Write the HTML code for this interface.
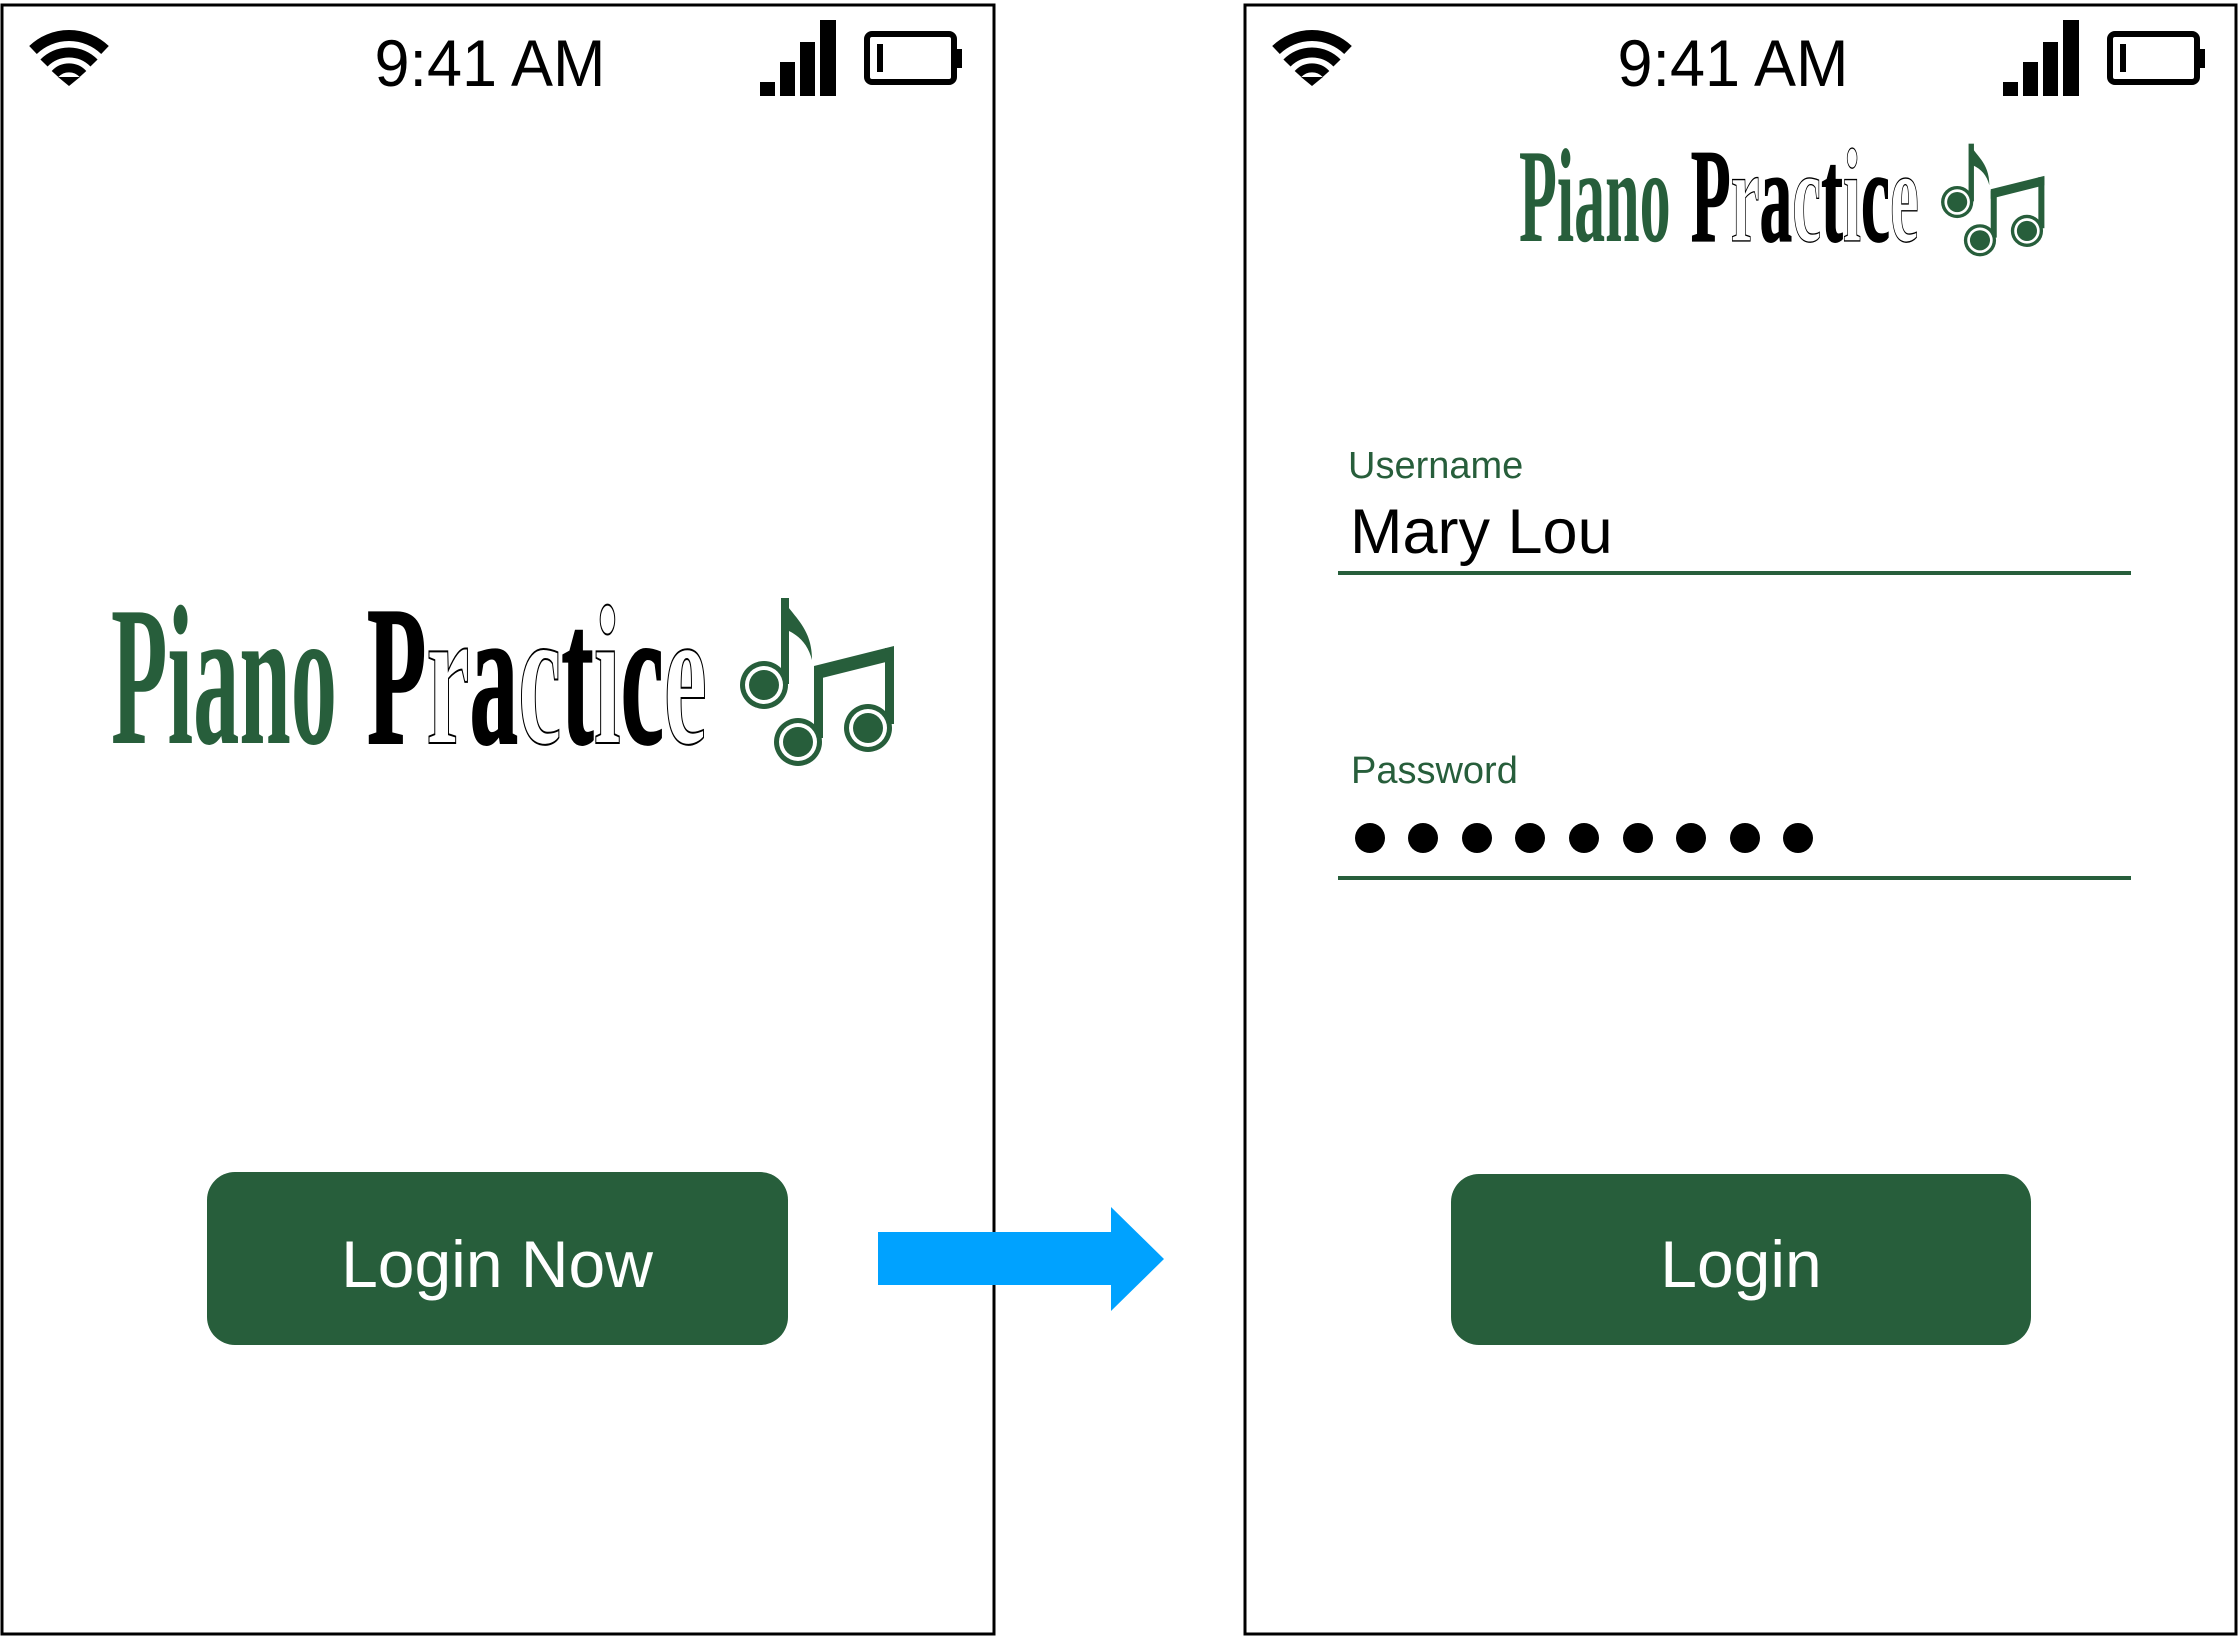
<!DOCTYPE html>
<html><head><meta charset="utf-8"><style>html,body{margin:0;padding:0;background:#fff;width:2239px;height:1637px;overflow:hidden}svg{display:block}</style></head><body>
<svg width="2239" height="1637" viewBox="0 0 2239 1637" xmlns="http://www.w3.org/2000/svg">
<rect x="0" y="0" width="2239" height="1637" fill="#fff"/>
<rect x="2" y="5" width="992" height="1629" fill="none" stroke="#000" stroke-width="3"/>
<rect x="1245" y="5" width="991" height="1629" fill="none" stroke="#000" stroke-width="3"/>

<g>
<path d="M33 50 A52 52 0 0 1 105 50" fill="none" stroke="#000" stroke-width="11"/>
<path d="M44 63 A35 35 0 0 1 94 63" fill="none" stroke="#000" stroke-width="10"/>
<path d="M55 74 A19 19 0 0 1 83 74" fill="none" stroke="#000" stroke-width="9"/>
<path d="M58 77 L69 86 L80 77 Z" fill="#000"/>
<text x="490" y="86" text-anchor="middle" font-family="Liberation Sans, sans-serif" font-size="66" textLength="231" lengthAdjust="spacingAndGlyphs" fill="#000">9:41 AM</text>
<rect x="760" y="82" width="15" height="14" fill="#000"/>
<rect x="780" y="62" width="15" height="34" fill="#000"/>
<rect x="800" y="42" width="15" height="54" fill="#000"/>
<rect x="820" y="20" width="16" height="76" fill="#000"/>
<rect x="867" y="34" width="87" height="48" rx="5" fill="none" stroke="#000" stroke-width="6"/>
<rect x="954" y="49" width="8" height="19" fill="#000"/>
<rect x="877" y="44" width="6" height="28" fill="#000"/>
</g>
<g transform="translate(1243,0)">
<path d="M33 50 A52 52 0 0 1 105 50" fill="none" stroke="#000" stroke-width="11"/>
<path d="M44 63 A35 35 0 0 1 94 63" fill="none" stroke="#000" stroke-width="10"/>
<path d="M55 74 A19 19 0 0 1 83 74" fill="none" stroke="#000" stroke-width="9"/>
<path d="M58 77 L69 86 L80 77 Z" fill="#000"/>
<text x="490" y="86" text-anchor="middle" font-family="Liberation Sans, sans-serif" font-size="66" textLength="231" lengthAdjust="spacingAndGlyphs" fill="#000">9:41 AM</text>
<rect x="760" y="82" width="15" height="14" fill="#000"/>
<rect x="780" y="62" width="15" height="34" fill="#000"/>
<rect x="800" y="42" width="15" height="54" fill="#000"/>
<rect x="820" y="20" width="16" height="76" fill="#000"/>
<rect x="867" y="34" width="87" height="48" rx="5" fill="none" stroke="#000" stroke-width="6"/>
<rect x="954" y="49" width="8" height="19" fill="#000"/>
<rect x="877" y="44" width="6" height="28" fill="#000"/>
</g>

<g>
<g transform="translate(111,743) scale(1,1.33)">
<text x="0" y="0" font-family="Liberation Serif, serif" font-weight="bold" font-size="150" textLength="226" lengthAdjust="spacingAndGlyphs" fill="#275e3b">Piano</text>
<text x="256" y="0" font-family="Liberation Serif, serif" font-weight="bold" font-size="150" textLength="340" lengthAdjust="spacingAndGlyphs" fill="#000" stroke="#000" stroke-width="1.5"><tspan>P</tspan><tspan fill="#fff">r</tspan><tspan>a</tspan><tspan fill="#fff">c</tspan><tspan>t</tspan><tspan fill="#fff">i</tspan><tspan>c</tspan><tspan fill="#fff">e</tspan></text>
</g>
<g fill="#275e3b">
<rect x="781" y="598" width="8" height="86"/>
<path d="M783 598 C790 615 812 625 812 660 C808 645 800 636 787 630 Z"/>
<circle cx="764" cy="685" r="24"/><circle cx="764" cy="685" r="19" fill="#fff"/><circle cx="764" cy="685" r="15"/>
<rect x="814" y="668" width="9" height="70"/>
<rect x="885" y="648" width="9" height="76"/>
<path d="M814 666 L894 646 L894 660 L814 680 Z"/>
<circle cx="798" cy="742" r="24"/><circle cx="798" cy="742" r="19" fill="#fff"/><circle cx="798" cy="742" r="15"/>
<circle cx="868" cy="728" r="24"/><circle cx="868" cy="728" r="19" fill="#fff"/><circle cx="868" cy="728" r="15"/>
</g>
</g>

<g transform="translate(1519,143) scale(0.671) translate(-111,-597)">
<g transform="translate(111,743) scale(1,1.33)">
<text x="0" y="0" font-family="Liberation Serif, serif" font-weight="bold" font-size="150" textLength="226" lengthAdjust="spacingAndGlyphs" fill="#275e3b">Piano</text>
<text x="256" y="0" font-family="Liberation Serif, serif" font-weight="bold" font-size="150" textLength="340" lengthAdjust="spacingAndGlyphs" fill="#000" stroke="#000" stroke-width="1.5"><tspan>P</tspan><tspan fill="#fff">r</tspan><tspan>a</tspan><tspan fill="#fff">c</tspan><tspan>t</tspan><tspan fill="#fff">i</tspan><tspan>c</tspan><tspan fill="#fff">e</tspan></text>
</g>
<g fill="#275e3b">
<rect x="781" y="598" width="8" height="86"/>
<path d="M783 598 C790 615 812 625 812 660 C808 645 800 636 787 630 Z"/>
<circle cx="764" cy="685" r="24"/><circle cx="764" cy="685" r="19" fill="#fff"/><circle cx="764" cy="685" r="15"/>
<rect x="814" y="668" width="9" height="70"/>
<rect x="885" y="648" width="9" height="76"/>
<path d="M814 666 L894 646 L894 660 L814 680 Z"/>
<circle cx="798" cy="742" r="24"/><circle cx="798" cy="742" r="19" fill="#fff"/><circle cx="798" cy="742" r="15"/>
<circle cx="868" cy="728" r="24"/><circle cx="868" cy="728" r="19" fill="#fff"/><circle cx="868" cy="728" r="15"/>
</g>
</g>

<rect x="207" y="1172" width="581" height="173" rx="28" fill="#275e3b"/>
<text x="497" y="1287" text-anchor="middle" font-family="Liberation Sans, sans-serif" font-size="66" fill="#fff">Login Now</text>

<path d="M878 1232 L1111 1232 L1111 1207 L1164 1259 L1111 1311 L1111 1285 L878 1285 Z" fill="#00a2ff"/>

<text x="1348" y="478" font-family="Liberation Sans, sans-serif" font-size="38" fill="#275e3b">Username</text>
<text x="1350" y="553" font-family="Liberation Sans, sans-serif" font-size="63" fill="#000">Mary Lou</text>
<rect x="1338" y="571" width="793" height="4" fill="#275e3b"/>
<text x="1351" y="783" font-family="Liberation Sans, sans-serif" font-size="38" fill="#275e3b">Password</text>
<g fill="#000">
<circle cx="1370" cy="838" r="15"/><circle cx="1423" cy="838" r="15"/><circle cx="1477" cy="838" r="15"/>
<circle cx="1530" cy="838" r="15"/><circle cx="1584" cy="838" r="15"/><circle cx="1638" cy="838" r="15"/>
<circle cx="1691" cy="838" r="15"/><circle cx="1745" cy="838" r="15"/><circle cx="1798" cy="838" r="15"/>
</g>
<rect x="1338" y="876" width="793" height="4" fill="#275e3b"/>

<rect x="1451" y="1174" width="580" height="171" rx="28" fill="#275e3b"/>
<text x="1741" y="1287" text-anchor="middle" font-family="Liberation Sans, sans-serif" font-size="66" fill="#fff">Login</text>
</svg>
</body></html>
